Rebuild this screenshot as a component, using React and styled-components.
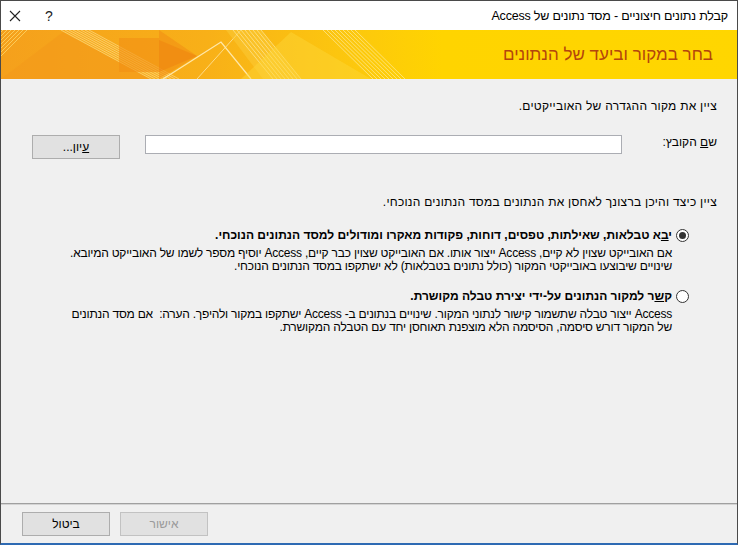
import styled, { createGlobalStyle } from "styled-components"

const Global = createGlobalStyle`
  html, body {
    margin: 0;
    padding: 0;
    background: #ffffff;
  }
  body {
    font-family: "Liberation Sans", "DejaVu Sans", sans-serif;
  }
`

const Window = styled.div`
  width: 738px;
  height: 545px;
  box-sizing: border-box;
  display: flex;
  flex-direction: column;
  direction: rtl;
  background: #f0f0f0;
  border: 1px solid #4a4a4a;
  border-bottom: 2px solid #2e6ab3;
  font-size: 12px;
  color: #000;
`

const TitleBar = styled.div`
  height: 29px;
  flex: none;
  display: flex;
  align-items: center;
  padding: 0 9px 0 8px;
  background: #ffffff;
`

const Title = styled.div`
  font-size: 12.5px;
  letter-spacing: -0.2px;
`

const Controls = styled.div`
  margin-right: auto;
  display: flex;
  flex-direction: row-reverse;
  align-items: center;
  gap: 24px;
`

const Help = styled.span`
  font-size: 14px;
  line-height: 1;
  color: #222;
`

const Banner = styled.div`
  height: 49px;
  flex: none;
  display: flex;
  align-items: center;
  padding-right: 24px;
  background: linear-gradient(90deg, #f5a01c 0%, #f8b018 28%, #fcc60f 46%, #ffd400 60%, #ffd600 100%);
  overflow: hidden;
`

const BannerTitle = styled.h1`
  margin: 0;
  font-size: 17px;
  font-weight: normal;
  color: #b4450c;
  white-space: nowrap;
`

const BannerArt = styled.svg`
  margin-right: auto;
  flex: none;
  display: block;
`

const Content = styled.div`
  flex: 1;
  padding: 20px 20px 0 20px;
`

const Text = styled.p`
  margin: ${p => p.$top || 0}px 0 0 0;
  line-height: 15px;
  letter-spacing: 0.25px;
  white-space: nowrap;
`

const FileRow = styled.div`
  display: flex;
  align-items: flex-start;
  margin-top: 21px;
`

const FieldLabel = styled.label`
  width: 95px;
  flex: none;
  line-height: 15px;
`

const TextInput = styled.div`
  width: 477px;
  height: 19px;
  box-sizing: border-box;
  background: #fff;
  border: 1px solid #abadb3;
`

const Button = styled.button`
  width: 88px;
  height: 24px;
  box-sizing: border-box;
  margin-right: ${p => p.$gap || 0}px;
  background: #e1e1e1;
  border: 1px solid ${p => (p.disabled ? "#c2c2c2" : "#adadad")};
  color: ${p => (p.disabled ? "#9a9a9a" : "#000")};
  font-family: inherit;
  font-size: 12px;
  padding: 0;
  direction: rtl;
`

const Option = styled.div`
  display: flex;
  align-items: flex-start;
  margin-top: ${p => p.$top}px;
  padding-right: 45px;
  position: relative;
`

const Radio = styled.span`
  position: absolute;
  right: 28px;
  top: 1px;
  width: 13px;
  height: 13px;
  box-sizing: border-box;
  border-radius: 50%;
  border: 1px solid #333;
  background: #fff;
  display: flex;
  align-items: center;
  justify-content: center;
  &::after {
    content: "";
    width: 7px;
    height: 7px;
    border-radius: 50%;
    background: #333;
    display: ${p => (p.$checked ? "block" : "none")};
  }
`

const OptionBody = styled.div`
  display: flex;
  flex-direction: column;
`

const OptionTitle = styled.div`
  font-weight: bold;
  line-height: 15px;
  white-space: nowrap;
`

const OptionDesc = styled.div`
  margin-top: 4px;
  line-height: 13px;
  letter-spacing: -0.22px;
  white-space: nowrap;
`

const Footer = styled.div`
  height: 40px;
  flex: none;
  box-sizing: border-box;
  border-top: 1px solid #a0a0a0;
  box-shadow: inset 0 1px 0 #d4d4d4;
  display: flex;
  align-items: flex-start;
  padding: 8px 0 0 21px;
  justify-content: flex-end;
`

const Hatch = ({ x1, y1, x2, y2, n, dx, color, op }) => {
  const lines = []
  for (let i = 0; i < n; i++) {
    lines.push(
      <line key={i} x1={x1 + i * dx} y1={y1} x2={x2 + i * dx} y2={y2} stroke={color} strokeWidth="1" opacity={op} />
    )
  }
  return <g>{lines}</g>
}

const Art = () => (
  <BannerArt width="420" height="49" viewBox="0 0 420 49">
    <polygon points="0,49 62,2 150,49" fill="#f39a1a" opacity="0.6" />
    <Hatch x1={-10} y1={0} x2={-40} y2={30} n={10} dx={4} color="#ffe27a" op={0.65} />
    <polygon points="58,0 88,0 178,49 150,49" fill="#f7b02a" opacity="0.55" />
    <Hatch x1={60} y1={0} x2={150} y2={49} n={8} dx={4} color="#ffe9a0" op={0.55} />
    <polygon points="118,8 158,8 158,0 196,26 158,49 158,42 118,42" fill="#f28f14" opacity="0.6" />
    <polygon points="158,10 196,26 158,42" fill="#ee8410" opacity="0.55" />
    <polyline points="162,49 220,12 250,49" fill="none" stroke="#ffeab0" strokeWidth="1.3" opacity="0.95" />
    <line x1="196" y1="49" x2="240" y2="0" stroke="#ffeab0" strokeWidth="1" opacity="0.75" />
    <polygon points="225,0 260,0 300,49 262,49" fill="#fccb3a" opacity="0.5" />
    <Hatch x1={232} y1={0} x2={272} y2={49} n={8} dx={4} color="#fff0b0" op={0.6} />
    <polygon points="240,49 290,2 370,49" fill="#fdd63a" opacity="0.45" />
    <Hatch x1={322} y1={0} x2={372} y2={49} n={9} dx={4} color="#fff3b8" op={0.6} />
  </BannerArt>
)

const CloseIcon = () => (
  <svg width="12" height="12" viewBox="0 0 12 12">
    <path d="M1 1 L11 11 M11 1 L1 11" stroke="#222" strokeWidth="1.1" fill="none" />
  </svg>
)

export default function App() {
  return (
    <>
      <Global />
      <Window>
        <TitleBar>
          <Title>קבלת נתונים חיצוניים - מסד נתונים של Access</Title>
          <Controls>
            <CloseIcon />
            <Help>?</Help>
          </Controls>
        </TitleBar>

        <Banner>
          <BannerTitle>בחר במקור וביעד של הנתונים</BannerTitle>
          <Art />
        </Banner>

        <Content>
          <Text>ציין את מקור ההגדרה של האובייקטים.</Text>

          <FileRow>
            <FieldLabel>ש<u>ם</u> הקובץ:</FieldLabel>
            <TextInput />
            <Button $gap={25}><u>ע</u>יון...</Button>
          </FileRow>

          <Text $top={36}>ציין כיצד והיכן ברצונך לאחסן את הנתונים במסד הנתונים הנוכחי.</Text>

          <Option $top={18}>
            <Radio $checked />
            <OptionBody>
              <OptionTitle>י<u>ב</u>א טבלאות, שאילתות, טפסים, דוחות, פקודות מאקרו ומודולים למסד הנתונים הנוכחי.</OptionTitle>
              <OptionDesc>
                אם האובייקט שצוין לא קיים, Access ייצור אותו. אם האובייקט שצוין כבר קיים, Access יוסיף מספר לשמו של האובייקט המיובא.
                <br />
                שינויים שיבוצעו באובייקטי המקור (כולל נתונים בטבלאות) לא ישתקפו במסד הנתונים הנוכחי.
              </OptionDesc>
            </OptionBody>
          </Option>

          <Option $top={16}>
            <Radio />
            <OptionBody>
              <OptionTitle>ק<u>ש</u>ר למקור הנתונים על-ידי יצירת טבלה מקושרת.</OptionTitle>
              <OptionDesc>
                Access ייצור טבלה שתשמור קישור לנתוני המקור. שינויים בנתונים ב- Access ישתקפו במקור ולהיפך. הערה:&nbsp; אם מסד הנתונים
                <br />
                של המקור דורש סיסמה, הסיסמה הלא מוצפנת תאוחסן יחד עם הטבלה המקושרת.
              </OptionDesc>
            </OptionBody>
          </Option>
        </Content>

        <Footer>
          <Button disabled>אישור</Button>
          <Button $gap={10}>ביטול</Button>
        </Footer>
      </Window>
    </>
  )
}
